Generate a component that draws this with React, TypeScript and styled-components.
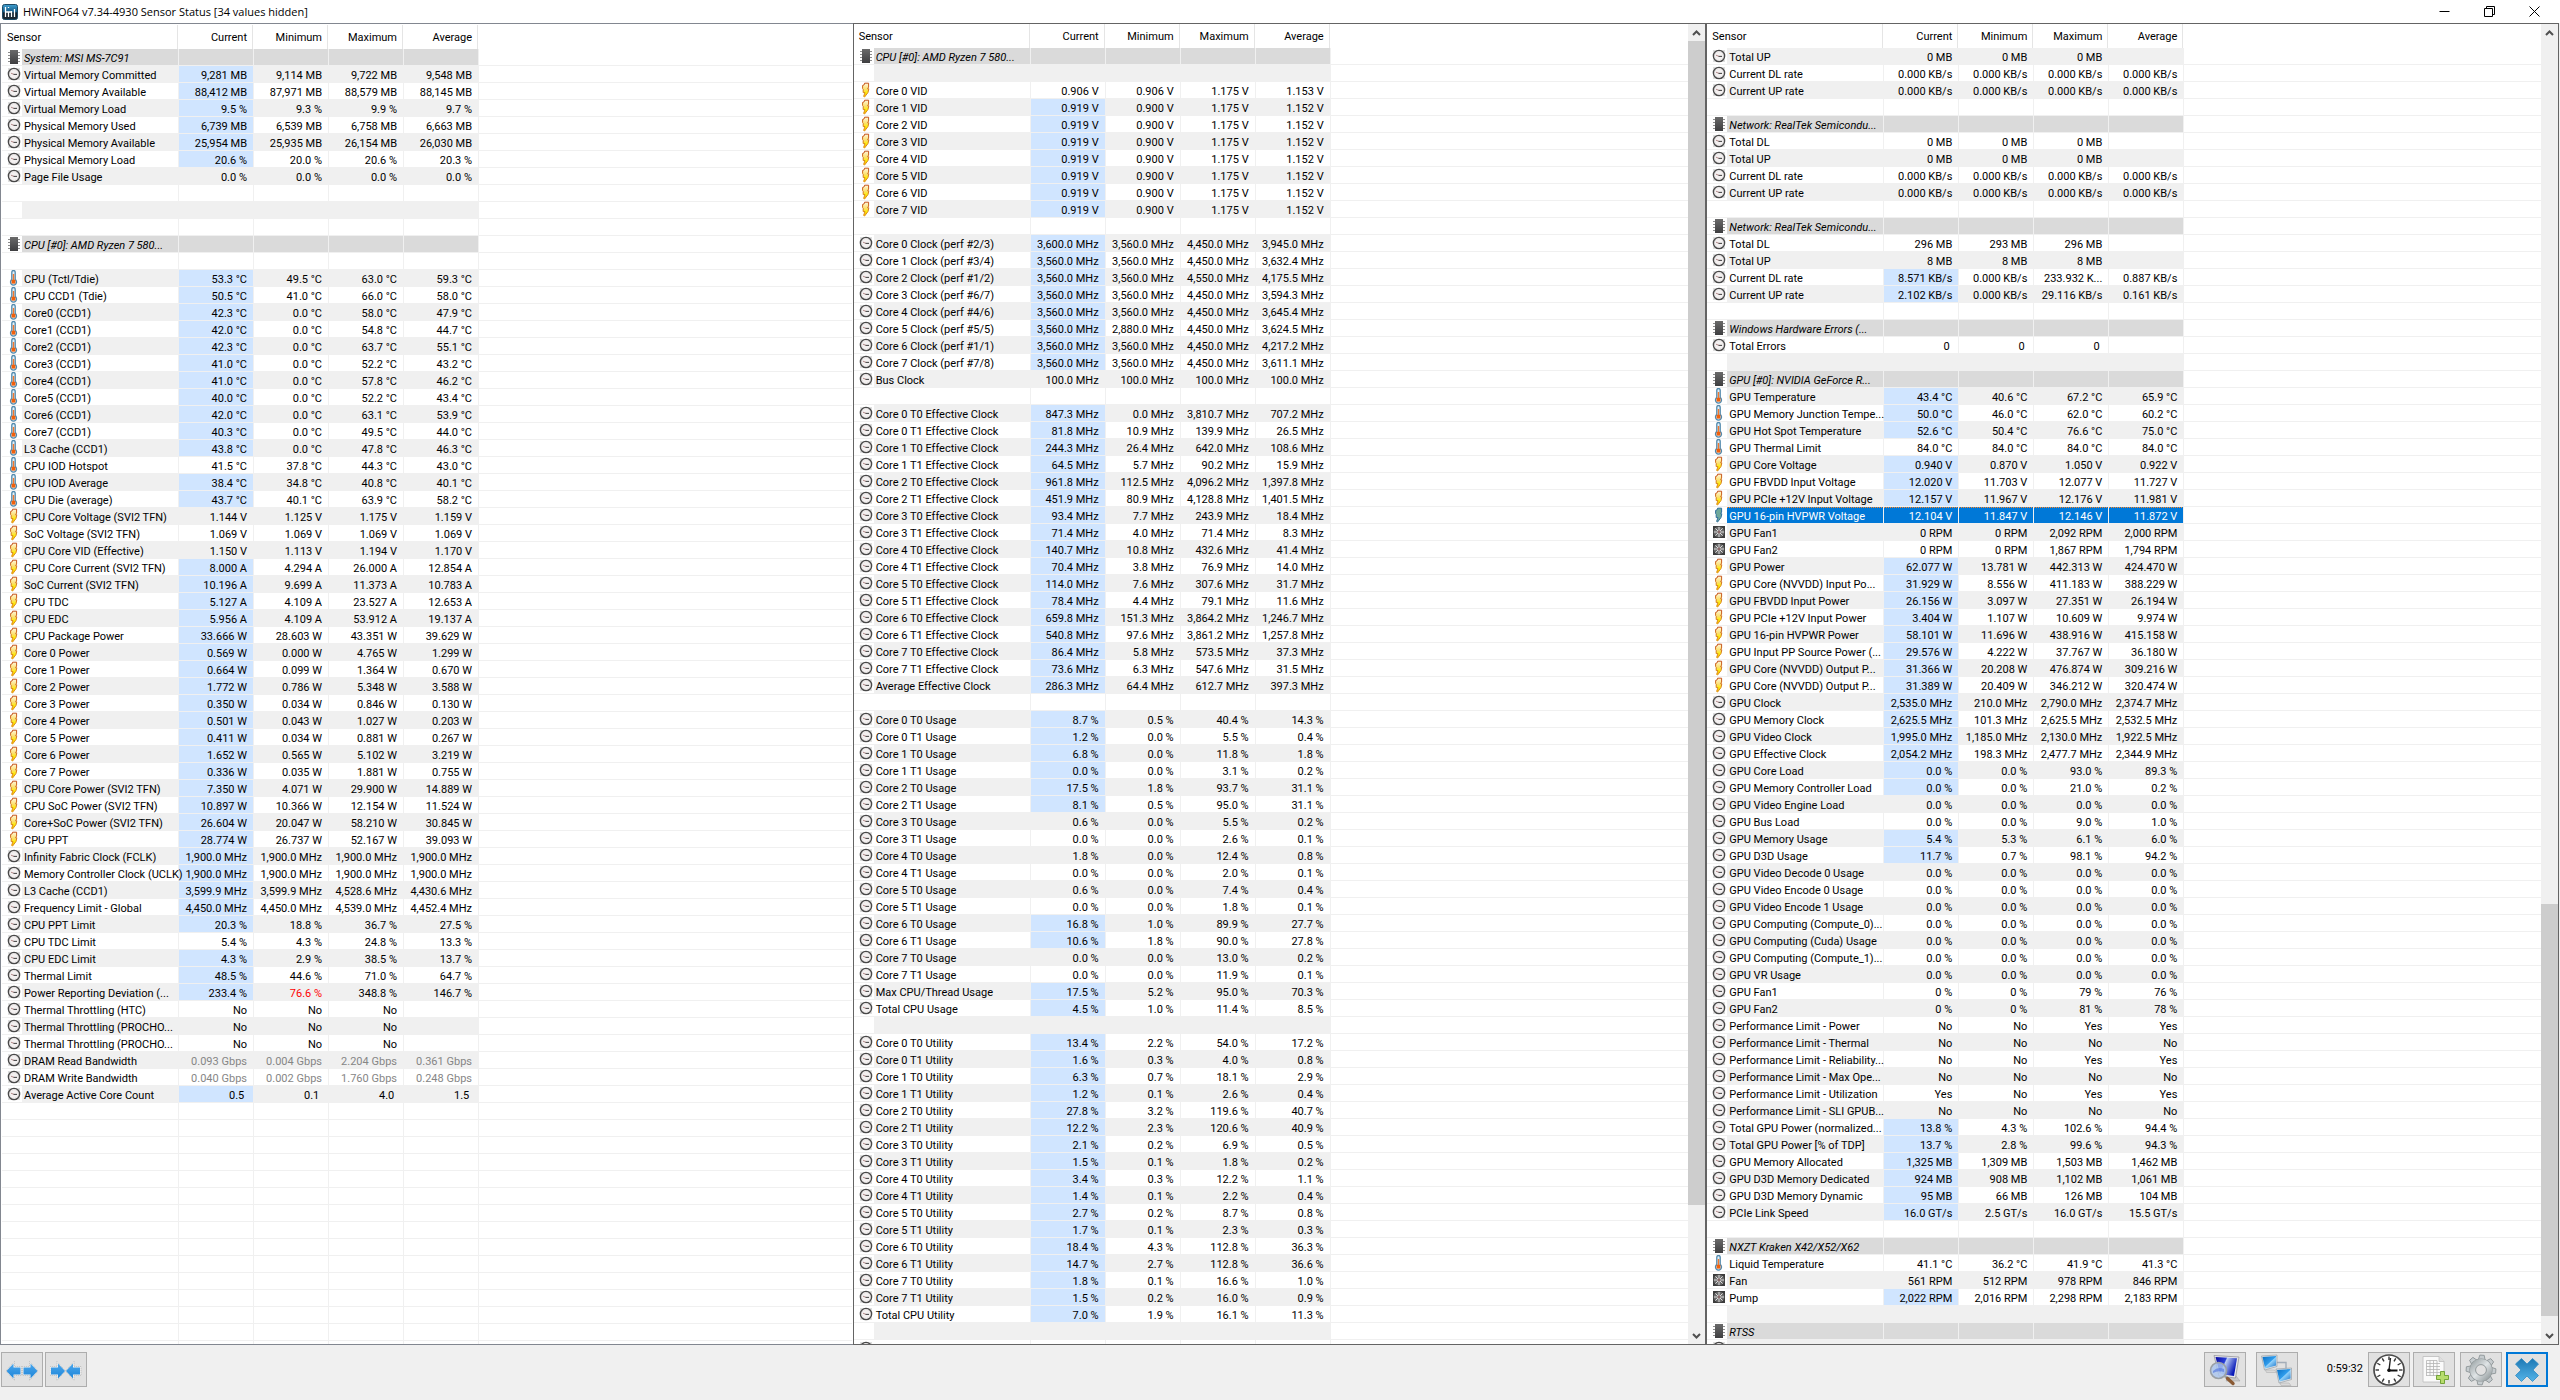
import React from "react";
import styled, { createGlobalStyle, css } from "styled-components";

const GlobalStyle = createGlobalStyle`
  * { box-sizing: border-box; }
  body { margin: 0; background: #f0f0f0; }
`;

const UI_FONT = `Roboto, "Noto Sans", sans-serif`;
const LINE = "#f0f0f0";

/* ---------- sensor data ----------
   Line: icon | name | current | minimum | maximum | average
   icon: S section, C clock, T thermometer, B bolt, F fan, X selected bolt,
   - blank row, E unused row below the list
   "*" before the current value marks it as changed, "!" a warning, "~" muted */

const SYSTEM = `
S|System: MSI MS-7C91
C|Virtual Memory Committed|*9,281 MB|9,114 MB|9,722 MB|9,548 MB
C|Virtual Memory Available|*88,412 MB|87,971 MB|88,579 MB|88,145 MB
C|Virtual Memory Load|*9.5 %|9.3 %|9.9 %|9.7 %
C|Physical Memory Used|*6,739 MB|6,539 MB|6,758 MB|6,663 MB
C|Physical Memory Available|*25,954 MB|25,935 MB|26,154 MB|26,030 MB
C|Physical Memory Load|*20.6 %|20.0 %|20.6 %|20.3 %
C|Page File Usage|0.0 %|0.0 %|0.0 %|0.0 %
-
-
-
S|CPU [#0]: AMD Ryzen 7 580...
-
T|CPU (Tctl/Tdie)|*53.3 °C|49.5 °C|63.0 °C|59.3 °C
T|CPU CCD1 (Tdie)|*50.5 °C|41.0 °C|66.0 °C|58.0 °C
T|Core0 (CCD1)|*42.3 °C|0.0 °C|58.0 °C|47.9 °C
T|Core1 (CCD1)|*42.0 °C|0.0 °C|54.8 °C|44.7 °C
T|Core2 (CCD1)|*42.3 °C|0.0 °C|63.7 °C|55.1 °C
T|Core3 (CCD1)|*41.0 °C|0.0 °C|52.2 °C|43.2 °C
T|Core4 (CCD1)|*41.0 °C|0.0 °C|57.8 °C|46.2 °C
T|Core5 (CCD1)|*40.0 °C|0.0 °C|52.2 °C|43.4 °C
T|Core6 (CCD1)|*42.0 °C|0.0 °C|63.1 °C|53.9 °C
T|Core7 (CCD1)|*40.3 °C|0.0 °C|49.5 °C|44.0 °C
T|L3 Cache (CCD1)|*43.8 °C|0.0 °C|47.8 °C|46.3 °C
T|CPU IOD Hotspot|41.5 °C|37.8 °C|44.3 °C|43.0 °C
T|CPU IOD Average|*38.4 °C|34.8 °C|40.8 °C|40.1 °C
T|CPU Die (average)|*43.7 °C|40.1 °C|63.9 °C|58.2 °C
B|CPU Core Voltage (SVI2 TFN)|1.144 V|1.125 V|1.175 V|1.159 V
B|SoC Voltage (SVI2 TFN)|1.069 V|1.069 V|1.069 V|1.069 V
B|CPU Core VID (Effective)|1.150 V|1.113 V|1.194 V|1.170 V
B|CPU Core Current (SVI2 TFN)|*8.000 A|4.294 A|26.000 A|12.854 A
B|SoC Current (SVI2 TFN)|*10.196 A|9.699 A|11.373 A|10.783 A
B|CPU TDC|*5.127 A|4.109 A|23.527 A|12.653 A
B|CPU EDC|*5.956 A|4.109 A|53.912 A|19.137 A
B|CPU Package Power|*33.666 W|28.603 W|43.351 W|39.629 W
B|Core 0 Power|*0.569 W|0.000 W|4.765 W|1.299 W
B|Core 1 Power|*0.664 W|0.099 W|1.364 W|0.670 W
B|Core 2 Power|*1.772 W|0.786 W|5.348 W|3.588 W
B|Core 3 Power|*0.350 W|0.034 W|0.846 W|0.130 W
B|Core 4 Power|*0.501 W|0.043 W|1.027 W|0.203 W
B|Core 5 Power|*0.411 W|0.034 W|0.881 W|0.267 W
B|Core 6 Power|*1.652 W|0.565 W|5.102 W|3.219 W
B|Core 7 Power|*0.336 W|0.035 W|1.881 W|0.755 W
B|CPU Core Power (SVI2 TFN)|*7.350 W|4.071 W|29.900 W|14.889 W
B|CPU SoC Power (SVI2 TFN)|*10.897 W|10.366 W|12.154 W|11.524 W
B|Core+SoC Power (SVI2 TFN)|*26.604 W|20.047 W|58.210 W|30.845 W
B|CPU PPT|*28.774 W|26.737 W|52.167 W|39.093 W
C|Infinity Fabric Clock (FCLK)|*1,900.0 MHz|1,900.0 MHz|1,900.0 MHz|1,900.0 MHz
C|Memory Controller Clock (UCLK)|*1,900.0 MHz|1,900.0 MHz|1,900.0 MHz|1,900.0 MHz
C|L3 Cache (CCD1)|*3,599.9 MHz|3,599.9 MHz|4,528.6 MHz|4,430.6 MHz
C|Frequency Limit - Global|*4,450.0 MHz|4,450.0 MHz|4,539.0 MHz|4,452.4 MHz
C|CPU PPT Limit|*20.3 %|18.8 %|36.7 %|27.5 %
C|CPU TDC Limit|5.4 %|4.3 %|24.8 %|13.3 %
C|CPU EDC Limit|*4.3 %|2.9 %|38.5 %|13.7 %
C|Thermal Limit|*48.5 %|44.6 %|71.0 %|64.7 %
C|Power Reporting Deviation (...|*233.4 %|!76.6 %|348.8 %|146.7 %
C|Thermal Throttling (HTC)|No|No|No|
C|Thermal Throttling (PROCHO...|No|No|No|
C|Thermal Throttling (PROCHO...|No|No|No|
C|DRAM Read Bandwidth|~0.093 Gbps|~0.004 Gbps|~2.204 Gbps|~0.361 Gbps
C|DRAM Write Bandwidth|~0.040 Gbps|~0.002 Gbps|~1.760 Gbps|~0.248 Gbps
C|Average Active Core Count|*0.5 |0.1 |4.0 |1.5 
`;

const CORES = `
S|CPU [#0]: AMD Ryzen 7 580...
-
B|Core 0 VID|0.906 V|0.906 V|1.175 V|1.153 V
B|Core 1 VID|*0.919 V|0.900 V|1.175 V|1.152 V
B|Core 2 VID|*0.919 V|0.900 V|1.175 V|1.152 V
B|Core 3 VID|*0.919 V|0.900 V|1.175 V|1.152 V
B|Core 4 VID|*0.919 V|0.900 V|1.175 V|1.152 V
B|Core 5 VID|*0.919 V|0.900 V|1.175 V|1.152 V
B|Core 6 VID|*0.919 V|0.900 V|1.175 V|1.152 V
B|Core 7 VID|*0.919 V|0.900 V|1.175 V|1.152 V
-
C|Core 0 Clock (perf #2/3)|*3,600.0 MHz|3,560.0 MHz|4,450.0 MHz|3,945.0 MHz
C|Core 1 Clock (perf #3/4)|*3,560.0 MHz|3,560.0 MHz|4,450.0 MHz|3,632.4 MHz
C|Core 2 Clock (perf #1/2)|*3,560.0 MHz|3,560.0 MHz|4,550.0 MHz|4,175.5 MHz
C|Core 3 Clock (perf #6/7)|*3,560.0 MHz|3,560.0 MHz|4,450.0 MHz|3,594.3 MHz
C|Core 4 Clock (perf #4/6)|*3,560.0 MHz|3,560.0 MHz|4,450.0 MHz|3,645.4 MHz
C|Core 5 Clock (perf #5/5)|*3,560.0 MHz|2,880.0 MHz|4,450.0 MHz|3,624.5 MHz
C|Core 6 Clock (perf #1/1)|*3,560.0 MHz|3,560.0 MHz|4,450.0 MHz|4,217.2 MHz
C|Core 7 Clock (perf #7/8)|*3,560.0 MHz|3,560.0 MHz|4,450.0 MHz|3,611.1 MHz
C|Bus Clock|100.0 MHz|100.0 MHz|100.0 MHz|100.0 MHz
-
C|Core 0 T0 Effective Clock|*847.3 MHz|0.0 MHz|3,810.7 MHz|707.2 MHz
C|Core 0 T1 Effective Clock|*81.8 MHz|10.9 MHz|139.9 MHz|26.5 MHz
C|Core 1 T0 Effective Clock|*244.3 MHz|26.4 MHz|642.0 MHz|108.6 MHz
C|Core 1 T1 Effective Clock|*64.5 MHz|5.7 MHz|90.2 MHz|15.9 MHz
C|Core 2 T0 Effective Clock|*961.8 MHz|112.5 MHz|4,096.2 MHz|1,397.8 MHz
C|Core 2 T1 Effective Clock|*451.9 MHz|80.9 MHz|4,128.8 MHz|1,401.5 MHz
C|Core 3 T0 Effective Clock|*93.4 MHz|7.7 MHz|243.9 MHz|18.4 MHz
C|Core 3 T1 Effective Clock|*71.4 MHz|4.0 MHz|71.4 MHz|8.3 MHz
C|Core 4 T0 Effective Clock|*140.7 MHz|10.8 MHz|432.6 MHz|41.4 MHz
C|Core 4 T1 Effective Clock|*70.4 MHz|3.8 MHz|76.9 MHz|14.0 MHz
C|Core 5 T0 Effective Clock|*114.0 MHz|7.6 MHz|307.6 MHz|31.7 MHz
C|Core 5 T1 Effective Clock|*78.4 MHz|4.4 MHz|79.1 MHz|11.6 MHz
C|Core 6 T0 Effective Clock|*659.8 MHz|151.3 MHz|3,864.2 MHz|1,246.7 MHz
C|Core 6 T1 Effective Clock|*540.8 MHz|97.6 MHz|3,861.2 MHz|1,257.8 MHz
C|Core 7 T0 Effective Clock|*86.4 MHz|5.8 MHz|573.5 MHz|37.3 MHz
C|Core 7 T1 Effective Clock|*73.6 MHz|6.3 MHz|547.6 MHz|31.5 MHz
C|Average Effective Clock|*286.3 MHz|64.4 MHz|612.7 MHz|397.3 MHz
-
C|Core 0 T0 Usage|*8.7 %|0.5 %|40.4 %|14.3 %
C|Core 0 T1 Usage|*1.2 %|0.0 %|5.5 %|0.4 %
C|Core 1 T0 Usage|*6.8 %|0.0 %|11.8 %|1.8 %
C|Core 1 T1 Usage|*0.0 %|0.0 %|3.1 %|0.2 %
C|Core 2 T0 Usage|*17.5 %|1.8 %|93.7 %|31.1 %
C|Core 2 T1 Usage|*8.1 %|0.5 %|95.0 %|31.1 %
C|Core 3 T0 Usage|0.6 %|0.0 %|5.5 %|0.2 %
C|Core 3 T1 Usage|0.0 %|0.0 %|2.6 %|0.1 %
C|Core 4 T0 Usage|1.8 %|0.0 %|12.4 %|0.8 %
C|Core 4 T1 Usage|0.0 %|0.0 %|2.0 %|0.1 %
C|Core 5 T0 Usage|0.6 %|0.0 %|7.4 %|0.4 %
C|Core 5 T1 Usage|0.0 %|0.0 %|1.8 %|0.1 %
C|Core 6 T0 Usage|*16.8 %|1.0 %|89.9 %|27.7 %
C|Core 6 T1 Usage|*10.6 %|1.8 %|90.0 %|27.8 %
C|Core 7 T0 Usage|0.0 %|0.0 %|13.0 %|0.2 %
C|Core 7 T1 Usage|0.0 %|0.0 %|11.9 %|0.1 %
C|Max CPU/Thread Usage|*17.5 %|5.2 %|95.0 %|70.3 %
C|Total CPU Usage|*4.5 %|1.0 %|11.4 %|8.5 %
-
C|Core 0 T0 Utility|*13.4 %|2.2 %|54.0 %|17.2 %
C|Core 0 T1 Utility|*1.6 %|0.3 %|4.0 %|0.8 %
C|Core 1 T0 Utility|*6.3 %|0.7 %|18.1 %|2.9 %
C|Core 1 T1 Utility|*1.2 %|0.1 %|2.6 %|0.4 %
C|Core 2 T0 Utility|*27.8 %|3.2 %|119.6 %|40.7 %
C|Core 2 T1 Utility|*12.2 %|2.3 %|120.6 %|40.9 %
C|Core 3 T0 Utility|*2.1 %|0.2 %|6.9 %|0.5 %
C|Core 3 T1 Utility|*1.5 %|0.1 %|1.8 %|0.2 %
C|Core 4 T0 Utility|*3.4 %|0.3 %|12.2 %|1.1 %
C|Core 4 T1 Utility|*1.4 %|0.1 %|2.2 %|0.4 %
C|Core 5 T0 Utility|*2.7 %|0.2 %|8.7 %|0.8 %
C|Core 5 T1 Utility|*1.7 %|0.1 %|2.3 %|0.3 %
C|Core 6 T0 Utility|*18.4 %|4.3 %|112.8 %|36.3 %
C|Core 6 T1 Utility|*14.7 %|2.7 %|112.8 %|36.6 %
C|Core 7 T0 Utility|*1.8 %|0.1 %|16.6 %|1.0 %
C|Core 7 T1 Utility|*1.5 %|0.2 %|16.0 %|0.9 %
C|Total CPU Utility|*7.0 %|1.9 %|16.1 %|11.3 %
-
C|
`;

const GPU = `
C|Total UP|0 MB|0 MB|0 MB|
C|Current DL rate|0.000 KB/s|0.000 KB/s|0.000 KB/s|0.000 KB/s
C|Current UP rate|0.000 KB/s|0.000 KB/s|0.000 KB/s|0.000 KB/s
-
S|Network: RealTek Semicondu...
C|Total DL|0 MB|0 MB|0 MB|
C|Total UP|0 MB|0 MB|0 MB|
C|Current DL rate|0.000 KB/s|0.000 KB/s|0.000 KB/s|0.000 KB/s
C|Current UP rate|0.000 KB/s|0.000 KB/s|0.000 KB/s|0.000 KB/s
-
S|Network: RealTek Semicondu...
C|Total DL|296 MB|293 MB|296 MB|
C|Total UP|8 MB|8 MB|8 MB|
C|Current DL rate|*8.571 KB/s|0.000 KB/s|233.932 K...|0.887 KB/s
C|Current UP rate|*2.102 KB/s|0.000 KB/s|29.116 KB/s|0.161 KB/s
-
S|Windows Hardware Errors (...
C|Total Errors|0 |0 |0 |
-
S|GPU [#0]: NVIDIA GeForce R...
T|GPU Temperature|*43.4 °C|40.6 °C|67.2 °C|65.9 °C
T|GPU Memory Junction Tempe...|*50.0 °C|46.0 °C|62.0 °C|60.2 °C
T|GPU Hot Spot Temperature|*52.6 °C|50.4 °C|76.6 °C|75.0 °C
T|GPU Thermal Limit|84.0 °C|84.0 °C|84.0 °C|84.0 °C
B|GPU Core Voltage|*0.940 V|0.870 V|1.050 V|0.922 V
B|GPU FBVDD Input Voltage|*12.020 V|11.703 V|12.077 V|11.727 V
B|GPU PCIe +12V Input Voltage|*12.157 V|11.967 V|12.176 V|11.981 V
X|GPU 16-pin HVPWR Voltage|12.104 V|11.847 V|12.146 V|11.872 V
F|GPU Fan1|0 RPM|0 RPM|2,092 RPM|2,000 RPM
F|GPU Fan2|0 RPM|0 RPM|1,867 RPM|1,794 RPM
B|GPU Power|*62.077 W|13.781 W|442.313 W|424.470 W
B|GPU Core (NVVDD) Input Po...|*31.929 W|8.556 W|411.183 W|388.229 W
B|GPU FBVDD Input Power|*26.156 W|3.097 W|27.351 W|26.194 W
B|GPU PCIe +12V Input Power|*3.404 W|1.107 W|10.609 W|9.974 W
B|GPU 16-pin HVPWR Power|*58.101 W|11.696 W|438.916 W|415.158 W
B|GPU Input PP Source Power (...|*29.576 W|4.222 W|37.767 W|36.180 W
B|GPU Core (NVVDD) Output P...|*31.366 W|20.208 W|476.874 W|309.216 W
B|GPU Core (NVVDD) Output P...|*31.389 W|20.409 W|346.212 W|320.474 W
C|GPU Clock|*2,535.0 MHz|210.0 MHz|2,790.0 MHz|2,374.7 MHz
C|GPU Memory Clock|*2,625.5 MHz|101.3 MHz|2,625.5 MHz|2,532.5 MHz
C|GPU Video Clock|*1,995.0 MHz|1,185.0 MHz|2,130.0 MHz|1,922.5 MHz
C|GPU Effective Clock|*2,054.2 MHz|198.3 MHz|2,477.7 MHz|2,344.9 MHz
C|GPU Core Load|*0.0 %|0.0 %|93.0 %|89.3 %
C|GPU Memory Controller Load|*0.0 %|0.0 %|21.0 %|0.2 %
C|GPU Video Engine Load|0.0 %|0.0 %|0.0 %|0.0 %
C|GPU Bus Load|0.0 %|0.0 %|9.0 %|1.0 %
C|GPU Memory Usage|*5.4 %|5.3 %|6.1 %|6.0 %
C|GPU D3D Usage|*11.7 %|0.7 %|98.1 %|94.2 %
C|GPU Video Decode 0 Usage|0.0 %|0.0 %|0.0 %|0.0 %
C|GPU Video Encode 0 Usage|0.0 %|0.0 %|0.0 %|0.0 %
C|GPU Video Encode 1 Usage|0.0 %|0.0 %|0.0 %|0.0 %
C|GPU Computing (Compute_0)...|0.0 %|0.0 %|0.0 %|0.0 %
C|GPU Computing (Cuda) Usage|0.0 %|0.0 %|0.0 %|0.0 %
C|GPU Computing (Compute_1)...|0.0 %|0.0 %|0.0 %|0.0 %
C|GPU VR Usage|0.0 %|0.0 %|0.0 %|0.0 %
C|GPU Fan1|0 %|0 %|79 %|76 %
C|GPU Fan2|0 %|0 %|81 %|78 %
C|Performance Limit - Power|No|No|Yes|Yes
C|Performance Limit - Thermal|No|No|No|No
C|Performance Limit - Reliability...|No|No|Yes|Yes
C|Performance Limit - Max Ope...|No|No|No|No
C|Performance Limit - Utilization|Yes|No|Yes|Yes
C|Performance Limit - SLI GPUB...|No|No|No|No
C|Total GPU Power (normalized...|*13.8 %|4.3 %|102.6 %|94.4 %
C|Total GPU Power [% of TDP]|*13.7 %|2.8 %|99.6 %|94.3 %
C|GPU Memory Allocated|*1,325 MB|1,309 MB|1,503 MB|1,462 MB
C|GPU D3D Memory Dedicated|*924 MB|908 MB|1,102 MB|1,061 MB
C|GPU D3D Memory Dynamic|*95 MB|66 MB|126 MB|104 MB
C|PCIe Link Speed|*16.0 GT/s|2.5 GT/s|16.0 GT/s|15.5 GT/s
-
S|NXZT Kraken X42/X52/X62
T|Liquid Temperature|41.1 °C|36.2 °C|41.9 °C|41.3 °C
F|Fan|561 RPM|512 RPM|978 RPM|846 RPM
F|Pump|*2,022 RPM|2,016 RPM|2,298 RPM|2,183 RPM
-
S|RTSS
C|
`;

type Kind = "section" | "even" | "odd" | "selected";

interface SensorRow {
  icon: string;
  name: string;
  values: string[];
}

const parse = (text: string): SensorRow[] =>
  text
    .slice(1, -1)
    .split("\n")
    .map((line) => {
      const [icon, name = "", ...values] = line.split("|");
      return { icon, name, values: [0, 1, 2, 3].map((i) => values[i] ?? "") };
    });

const unusedRows = (count: number): SensorRow[] =>
  Array.from({ length: count }, () => ({ icon: "E", name: "", values: ["", "", "", ""] }));

/* ---------- icons ---------- */

const Glyph = styled.svg`
  display: block;
  width: 16px;
  height: 16px;
  flex: none;
`;

const DefsSvg = styled.svg`
  position: absolute;
  width: 0;
  height: 0;
`;

const SharedDefs = () => (
  <DefsSvg aria-hidden="true">
    <defs>
      <linearGradient id="chip" x1="0" y1="0" x2="0" y2="1">
        <stop offset="0" stopColor="#6a6a6a" />
        <stop offset="1" stopColor="#3e3e40" />
      </linearGradient>
      <linearGradient id="bolt" x1="0" y1="0" x2="0" y2="1">
        <stop offset="0" stopColor="#fff6dc" />
        <stop offset="0.45" stopColor="#fbdf6a" />
        <stop offset="0.7" stopColor="#fdf000" />
        <stop offset="1" stopColor="#f2a000" />
      </linearGradient>
      <linearGradient id="boltEdge" x1="0" y1="0" x2="0" y2="1">
        <stop offset="0" stopColor="#c4531c" />
        <stop offset="1" stopColor="#e39a1c" />
      </linearGradient>
      <linearGradient id="arrow" x1="0" y1="0" x2="0" y2="1">
        <stop offset="0" stopColor="#4aa6ec" />
        <stop offset="1" stopColor="#1f86d8" />
      </linearGradient>
      <linearGradient id="screen" x1="0" y1="0" x2="1" y2="0.4">
        <stop offset="0" stopColor="#0a0aa0" />
        <stop offset="0.45" stopColor="#2a3fd8" />
        <stop offset="0.5" stopColor="#b9ccf4" />
        <stop offset="1" stopColor="#0818b8" />
      </linearGradient>
      <linearGradient id="screen2" x1="0" y1="0" x2="1" y2="1">
        <stop offset="0" stopColor="#0a6fc4" />
        <stop offset="0.5" stopColor="#2f9cec" />
        <stop offset="0.55" stopColor="#8fd0fa" />
        <stop offset="1" stopColor="#1470c8" />
      </linearGradient>
      <linearGradient id="steel" x1="0" y1="0" x2="1" y2="1">
        <stop offset="0" stopColor="#a4acae" />
        <stop offset="0.5" stopColor="#dfe4e6" />
        <stop offset="1" stopColor="#9aa2a4" />
      </linearGradient>
      <linearGradient id="cross" x1="0" y1="0" x2="0" y2="1">
        <stop offset="0" stopColor="#1d78b4" />
        <stop offset="1" stopColor="#55b4e8" />
      </linearGradient>
      <linearGradient id="logo" x1="0" y1="0" x2="0" y2="1">
        <stop offset="0" stopColor="#3f9fd0" />
        <stop offset="0.5" stopColor="#145a86" />
        <stop offset="0.55" stopColor="#10202c" />
        <stop offset="1" stopColor="#1c2a34" />
      </linearGradient>
    </defs>
  </DefsSvg>
);

const ChipIcon = () => (
  <Glyph viewBox="0 0 16 16">
    <path d="M2 3.5h12M2 6.5h12M2 9.5h12M2 12.5h12" stroke="#8c8c8c" strokeWidth="1" />
    <rect x="4" y="1" width="8" height="14" fill="url(#chip)" />
  </Glyph>
);

const ClockIcon = () => (
  <Glyph viewBox="0 0 16 16">
    <rect x="2" y="2" width="12" height="12" fill="#dedede" />
    <circle cx="8" cy="8" r="5.6" fill="#f4f1f1" stroke="#484848" strokeWidth="1.4" />
    <circle cx="8" cy="8" r="4.4" fill="none" stroke="#c4c0c0" strokeWidth="0.8" strokeDasharray="1 1.3" />
    <path d="M5 7.2L8 8.4" stroke="#b58a8a" strokeWidth="1" />
    <path d="M7.6 8.4H11" stroke="#4a4a4a" strokeWidth="1.1" />
  </Glyph>
);

const ThermometerIcon = () => (
  <Glyph viewBox="0 0 16 16">
    <path
      d="M7.5 0.5a1.7 1.7 0 0 1 1.7 1.7V9.6a3 3 0 1 1-3.4 0V2.2A1.7 1.7 0 0 1 7.5 0.5Z"
      fill="#e2f0fa"
      stroke="#4f88ac"
      strokeWidth="1.3"
    />
    <rect x="6.8" y="4" width="1.4" height="7" fill="#f07830" />
    <rect x="5.6" y="9.8" width="3.8" height="3.8" fill="#f0600c" />
  </Glyph>
);

const BoltIcon = ({ tinted }: { tinted?: boolean }) => (
  <Glyph viewBox="0 0 16 16">
    <path
      d="M6.6 1.2H10.6V5L9.6 6.8H10.8L10 10.5L6.6 15L5.6 14.4L7 10.6H5.2V7.4L4.6 6.6V3.4L6 3Z"
      fill={tinted ? "#6fa89a" : "url(#bolt)"}
      stroke={tinted ? "#2f6f9c" : "url(#boltEdge)"}
      strokeWidth="1"
    />
  </Glyph>
);

const FanIcon = () => (
  <Glyph viewBox="0 0 16 16">
    <rect x="2" y="2" width="12" height="12" fill="#3c3c3c" />
    <circle cx="8" cy="8" r="5.4" fill="#6a6a6a" />
    <path
      d="M8 8V3M8 8V13M8 8H3M8 8H13M8 8L4.4 4.4M8 8L11.6 11.6M8 8L11.6 4.4M8 8L4.4 11.6"
      stroke="#dcdcdc"
      strokeWidth="1"
    />
    <circle cx="8" cy="8" r="1.4" fill="#8a6a6a" />
  </Glyph>
);

const icons: Record<string, React.ReactNode> = {
  S: <ChipIcon />,
  C: <ClockIcon />,
  T: <ThermometerIcon />,
  B: <BoltIcon />,
  X: <BoltIcon tinted />,
  F: <FanIcon />,
};

/* ---------- window frame ---------- */

const Window = styled.div`
  display: flex;
  flex-direction: column;
  height: 100vh;
  overflow: hidden;
  background: #f0f0f0;
  color: #000;
  font: 11px/16px ${UI_FONT};
`;

const TitleBar = styled.header`
  display: flex;
  align-items: center;
  height: 23px;
  flex: none;
  padding: 0 3px 0 2px;
  gap: 5px;
  background: #fff;
`;

const Title = styled.h1`
  flex: 1;
  margin: 0;
  font: 11px/22px "Open Sans", "Noto Sans", sans-serif;
`;

const CaptionButtons = styled.div`
  display: flex;
`;

const CaptionButton = styled.button`
  display: grid;
  place-items: center;
  width: 45px;
  height: 22px;
  padding: 0;
  border: 0;
  background: transparent;
`;

const CaptionGlyph = styled.svg`
  display: block;
  width: 11px;
  height: 11px;
  fill: none;
  stroke: #000;
  stroke-width: 1;
`;

const Panes = styled.main`
  flex: 1;
  min-height: 0;
  display: grid;
  grid-template-columns: repeat(3, minmax(0, 1fr));
  padding-right: 2px;
  background: linear-gradient(#646464, #646464) calc(100% - 1px) 0 / 1px 100% no-repeat #f0f0f0;
`;

const Pane = styled.section<{ $edge: number; $muted?: boolean }>`
  display: flex;
  min-width: 0;
  overflow: hidden;
  background: #fff;
  border: 0 solid ${(p) => (p.$muted ? "#828790" : "#646464")};
  border-width: 1px 0 1px ${(p) => p.$edge}px;
  ${(p) =>
    p.$muted &&
    css`
      padding: 1px 1px 0 1px;
    `}
`;

const ListView = styled.div`
  flex: 1;
  min-width: 0;
  overflow: hidden;
`;

/* ---------- sensor table ---------- */

const Table = styled.table`
  width: 100%;
  table-layout: fixed;
  border-collapse: separate;
  border-spacing: 0;
  white-space: pre;
`;

const IconCol = styled.col`
  width: 20px;
`;
const NameCol = styled.col`
  width: 157px;
`;
const ValueCol = styled.col`
  width: 75px;
`;

const HeadCell = styled.th<{ $left?: boolean }>`
  height: 24px;
  padding: ${(p) => (p.$left ? "2px 0 0 5px" : "2px 7px 0 0")};
  background: linear-gradient(#e5e5e5, #e5e5e5) calc(100% - 1px) 0 / 1px 100% no-repeat;
  font-weight: normal;
  text-align: ${(p) => (p.$left ? "left" : "right")};
`;

const HeadFiller = styled.th`
  padding: 0;
`;

const rowFill: Record<Kind, string> = {
  section: "#dadada",
  even: "#ffffff",
  odd: "#f0f0f0",
  selected: "#0078d7",
};

const baseCell = css`
  height: 17px;
  padding: 0;
  border-bottom: 1px solid ${LINE};
  background-clip: padding-box;
`;

const textCell = css<{ $kind: Kind }>`
  ${baseCell}
  padding-top: 3px;
  line-height: 13px;
  border-right: 1px solid ${LINE};
  background-color: ${(p) => rowFill[p.$kind]};
  ${(p) =>
    p.$kind === "selected" &&
    css`
      background-image: repeating-linear-gradient(90deg, #ff8728 0 1px, transparent 1px 2px);
      background-size: 100% 1px;
      background-repeat: no-repeat;
    `}
`;

const IconCell = styled.td`
  ${baseCell}
  padding-left: 4px;
`;

const NameCell = styled.th<{ $kind: Kind }>`
  ${textCell}
  padding-left: 2px;
  font-weight: normal;
  font-style: ${(p) => (p.$kind === "section" ? "italic" : "normal")};
  text-align: left;
  color: ${(p) => (p.$kind === "selected" ? "#fff" : "#000")};
`;

const toneColor: Record<string, string> = { "!": "#ff0000", "~": "#868686" };

const ValueCell = styled.td<{ $kind: Kind; $changed: boolean; $tone: string }>`
  ${textCell}
  padding-right: 6px;
  ${(p) => p.$changed && "background-color: #d0e5ff;"}
  text-align: right;
  color: ${(p) => (p.$kind === "selected" ? "#fff" : toneColor[p.$tone] ?? "#000")};
`;

const FillerCell = styled.td`
  ${baseCell}
`;

const kindOf = (row: SensorRow, index: number, phase: number): Kind => {
  if (row.icon === "S") return "section";
  if (row.icon === "X") return "selected";
  return row.icon === "E" || index % 2 === phase ? "even" : "odd";
};

const SensorTable = ({ rows, phase }: { rows: SensorRow[]; phase: number }) => (
  <Table>
    <colgroup>
      <IconCol />
      <NameCol />
      <ValueCol />
      <ValueCol />
      <ValueCol />
      <ValueCol />
      <col />
    </colgroup>
    <thead>
      <tr>
        <HeadCell $left colSpan={2} scope="col">
          Sensor
        </HeadCell>
        <HeadCell scope="col">Current</HeadCell>
        <HeadCell scope="col">Minimum</HeadCell>
        <HeadCell scope="col">Maximum</HeadCell>
        <HeadCell scope="col">Average</HeadCell>
        <HeadFiller />
      </tr>
    </thead>
    <tbody>
      {rows.map((row, i) => {
        const kind = kindOf(row, i, phase);
        return (
          <tr key={i}>
            <IconCell>{icons[row.icon]}</IconCell>
            <NameCell $kind={kind} scope="row">
              {row.name}
            </NameCell>
            {row.values.map((value, j) => (
              <ValueCell key={j} $kind={kind} $changed={value[0] === "*"} $tone={value[0] ?? ""}>
                {value.replace(/^[*!~]/, "")}
              </ValueCell>
            ))}
            <FillerCell />
          </tr>
        );
      })}
    </tbody>
  </Table>
);

/* ---------- scroll bar ---------- */

const ScrollTrack = styled.div`
  flex: none;
  display: flex;
  flex-direction: column;
  width: 17px;
  background: #f0f0f0;
`;

const ScrollButton = styled.button`
  display: grid;
  place-items: center;
  width: 100%;
  height: 17px;
  padding: 0;
  border: 0;
  background: transparent;
`;

const ScrollRun = styled.div`
  flex: 1;
  min-height: 0;
  display: flex;
  flex-direction: column;
`;

const Portion = styled.div<{ $share: number; $thumb?: boolean }>`
  flex: ${(p) => p.$share} 0 0;
  background: ${(p) => (p.$thumb ? "#cdcdcd" : "transparent")};
`;

const Chevron = ({ down }: { down?: boolean }) => (
  <svg width="9" height="6" viewBox="0 0 9 6" aria-hidden="true">
    <path d={down ? "M1 1L4.5 4.5L8 1" : "M1 5L4.5 1.5L8 5"} fill="none" stroke="#505050" strokeWidth="2" />
  </svg>
);

const ScrollBar = ({ before, thumb, after }: { before: number; thumb: number; after: number }) => (
  <ScrollTrack>
    <ScrollButton aria-label="Scroll up">
      <Chevron />
    </ScrollButton>
    <ScrollRun>
      <Portion $share={before} />
      <Portion $share={thumb} $thumb />
      <Portion $share={after} />
    </ScrollRun>
    <ScrollButton aria-label="Scroll down">
      <Chevron down />
    </ScrollButton>
  </ScrollTrack>
);

/* ---------- bottom tool bar ---------- */

const ToolBar = styled.footer`
  display: flex;
  justify-content: space-between;
  flex: none;
  height: 55px;
  padding: 7px 12px 0 1px;
`;

const Group = styled.div<{ $gap: number }>`
  display: flex;
  gap: ${(p) => p.$gap}px;
`;

const ToolButton = styled.button<{ $primary?: boolean }>`
  display: grid;
  place-items: center;
  width: 42px;
  height: 35px;
  padding: 0;
  border: ${(p) => (p.$primary ? "2px solid #0078d7" : "1px solid #adadad")};
  background: #e1e1e1;
`;

const ToolGlyph = styled.svg`
  display: block;
  width: 32px;
  height: 32px;
`;

const Elapsed = styled.time`
  width: 60px;
  line-height: 34px;
  text-align: right;
`;

const ExpandIcon = () => (
  <ToolGlyph viewBox="0 0 32 32">
    <path
      d="M0 17L8.5 7.5V12.5H15.5V21.5H8.5V26.5ZM32 17L23.5 7.5V12.5H16.5V21.5H23.5V26.5Z"
      fill="#f2f2f2"
      stroke="#a8a8a8"
      strokeWidth="0.7"
      strokeDasharray="1 1"
    />
    <path
      d="M0.5 17L7.5 9.5V13.5H14.5V20.5H7.5V24.5ZM31.5 17L24.5 9.5V13.5H17.5V20.5H24.5V24.5Z"
      fill="url(#arrow)"
    />
  </ToolGlyph>
);

const ShrinkIcon = () => (
  <ToolGlyph viewBox="0 0 32 32">
    <path
      d="M15.5 17L7 7.5V12.5H0V21.5H7V26.5ZM15.5 17L24 7.5V12.5H31V21.5H24V26.5Z"
      fill="#f2f2f2"
      stroke="#a8a8a8"
      strokeWidth="0.7"
      strokeDasharray="1 1"
    />
    <path
      d="M15 17L8 9.5V13.5H1V20.5H8V24.5ZM16 17L23 9.5V13.5H30V20.5H23V24.5Z"
      fill="url(#arrow)"
    />
  </ToolGlyph>
);

const InspectIcon = () => (
  <ToolGlyph viewBox="0 0 32 32">
    <path d="M17 27H31L27 22H20Z" fill="#c9c9c9" stroke="#9a9a9a" strokeWidth="0.5" />
    <path d="M5 1.5L30 3L26.5 24L10 22Z" fill="#e6e6ea" stroke="#8c8c94" strokeWidth="0.7" />
    <path d="M6.5 3L28 4.2L25 22L11 20Z" fill="url(#screen)" />
    <path d="M16 22L20.5 26" stroke="#9aa0a6" strokeWidth="2.4" />
    <path d="M18.5 24.5L24 29.5" stroke="#8a5a34" strokeWidth="3.4" strokeLinecap="round" />
    <circle cx="9.5" cy="16.5" r="8" fill="#a9c4ee" fillOpacity="0.82" stroke="#9aa0a6" strokeWidth="1.6" />
    <path d="M4 17Q9 12 15 15V18Q9 16 4 19Z" fill="#5a7ce0" fillOpacity="0.7" />
  </ToolGlyph>
);

const Monitor = ({ x, y }: { x: number; y: number }) => (
  <g transform={`translate(${x} ${y})`}>
    <path d="M4 15H13L15 17.5H5Z" fill="#d8d8d8" stroke="#a8a8a8" strokeWidth="0.5" />
    <path d="M0 1L15.5 0V11.5L3 15Z" fill="#dde2e6" stroke="#8e969c" strokeWidth="0.6" />
    <path d="M1 2L14.6 1V10.6L3.6 13.6Z" fill="url(#screen2)" />
  </g>
);

const NetworkIcon = () => (
  <ToolGlyph viewBox="0 0 32 32">
    <path d="M15 8.5H25V15" fill="none" stroke="#a3adb8" strokeWidth="1.4" />
    <Monitor x={0.5} y={1} />
    <Monitor x={15} y={14} />
  </ToolGlyph>
);

const WallClockIcon = () => (
  <ToolGlyph viewBox="0 0 32 32">
    <circle cx="16" cy="16" r="15" fill="#fff" stroke="#4a4a4a" strokeWidth="1.7" />
    {Array.from({ length: 12 }, (_, i) => (
      <path key={i} d="M16 2.5V6" stroke="#333" strokeWidth="1.4" transform={`rotate(${i * 30} 16 16)`} />
    ))}
    <path d="M16 16L17.5 4" stroke="#222" strokeWidth="1.4" />
    <path d="M15 16.5H24.5" stroke="#111" strokeWidth="2" />
    <circle cx="16" cy="16.3" r="1.8" fill="#111" />
  </ToolGlyph>
);

const LogIcon = () => (
  <ToolGlyph viewBox="0 0 32 32">
    <path d="M5 2.5H21L26 7.5V28H5Z" fill="#fafafa" stroke="#c2c2c2" strokeWidth="0.9" />
    <path d="M21 2.5V7.5H26" fill="#dedede" stroke="#b8b8b8" strokeWidth="0.7" />
    <path
      d="M8.5 6.5H19M8.5 9.5H22M8.5 12.5H22M8.5 15.5H22M8.5 18.5H22M8.5 21.5H20M8.5 6.5V22M12 6.5V22M15.5 6.5V22M19 6.5V22"
      stroke="#b4b4b4"
      strokeWidth="0.8"
    />
    <path
      d="M22.5 17.5H26.5V21.5H30.5V25.5H26.5V29.5H22.5V25.5H18.5V21.5H22.5Z"
      fill="#b6dc6c"
      stroke="#6a9c2c"
      strokeWidth="0.9"
    />
  </ToolGlyph>
);

const GearIcon = () => (
  <ToolGlyph viewBox="0 0 32 32">
    {Array.from({ length: 8 }, (_, i) => (
      <path
        key={i}
        d="M12.6 6L13.8 1.2H18.2L19.4 6Z"
        fill="#c6cccf"
        stroke="#8f9698"
        strokeWidth="0.9"
        transform={`rotate(${i * 45 + 4} 16 16)`}
      />
    ))}
    <circle cx="16" cy="16" r="8.2" fill="none" stroke="#8f9698" strokeWidth="6.8" />
    <circle cx="16" cy="16" r="8.2" fill="none" stroke="url(#steel)" strokeWidth="5.6" />
    <circle cx="16" cy="16" r="5.4" fill="#e1e1e1" stroke="#8f9698" strokeWidth="0.9" />
  </ToolGlyph>
);

const CrossIcon = () => (
  <ToolGlyph viewBox="0 0 32 32">
    <path
      d="M10.5 4.5L16 10L21.5 4.5L27.5 10L22 16L27.5 21.5L21.5 27.5L16 22L10.5 27.5L4.5 21.5L10 16L4.5 10Z"
      fill="url(#cross)"
      stroke="#2f8ac4"
      strokeWidth="0.8"
    />
  </ToolGlyph>
);

const systemRows = [...parse(SYSTEM), ...unusedRows(16)];
const coreRows = parse(CORES);
const gpuRows = parse(GPU);

export default function App() {
  return (
    <Window>
      <GlobalStyle />
      <SharedDefs />
      <TitleBar>
        <Glyph viewBox="0 0 16 16" aria-hidden="true">
          <rect x="0.5" y="0.5" width="15" height="15" rx="2" fill="url(#logo)" stroke="#1c4a66" />
          <path d="M3.5 3V13M6.5 8V13M9.5 7V13M12.5 5V13M6.5 3V4M3.5 8H10" stroke="#fff" strokeWidth="1.3" />
        </Glyph>
        <Title>HWiNFO64 v7.34-4930 Sensor Status [34 values hidden]</Title>
        <CaptionButtons>
          <CaptionButton aria-label="Minimize">
            <CaptionGlyph viewBox="0 0 11 11">
              <path d="M0.5 5.5H10.5" />
            </CaptionGlyph>
          </CaptionButton>
          <CaptionButton aria-label="Restore">
            <CaptionGlyph viewBox="0 0 11 11">
              <path d="M0.5 2.5H8.5V10.5H0.5ZM2.5 2.5V0.5H10.5V8.5H8.5" />
            </CaptionGlyph>
          </CaptionButton>
          <CaptionButton aria-label="Close window">
            <CaptionGlyph viewBox="0 0 11 11">
              <path d="M0.5 0.5L10.5 10.5M10.5 0.5L0.5 10.5" />
            </CaptionGlyph>
          </CaptionButton>
        </CaptionButtons>
      </TitleBar>

      <Panes>
        <Pane $edge={1} $muted aria-label="System and CPU sensors">
          <ListView>
            <SensorTable rows={systemRows} phase={0} />
          </ListView>
        </Pane>
        <Pane $edge={1} aria-label="CPU core sensors">
          <ListView>
            <SensorTable rows={coreRows} phase={0} />
          </ListView>
          <ScrollBar before={0} thumb={1164} after={122} />
        </Pane>
        <Pane $edge={2} aria-label="Network and GPU sensors">
          <ListView>
            <SensorTable rows={gpuRows} phase={1} />
          </ListView>
          <ScrollBar before={863} thumb={412} after={11} />
        </Pane>
      </Panes>

      <ToolBar>
        <Group $gap={2}>
          <ToolButton aria-label="Expand columns">
            <ExpandIcon />
          </ToolButton>
          <ToolButton aria-label="Shrink columns">
            <ShrinkIcon />
          </ToolButton>
        </Group>
        <Group $gap={5}>
          <Group $gap={10}>
            <ToolButton aria-label="System summary">
              <InspectIcon />
            </ToolButton>
            <ToolButton aria-label="Remote monitoring">
              <NetworkIcon />
            </ToolButton>
          </Group>
          <Elapsed>0:59:32</Elapsed>
          <Group $gap={3}>
            <ToolButton aria-label="Reset timer">
              <WallClockIcon />
            </ToolButton>
            <ToolButton aria-label="Start logging">
              <LogIcon />
            </ToolButton>
          </Group>
          <Group $gap={4}>
            <ToolButton aria-label="Settings">
              <GearIcon />
            </ToolButton>
            <ToolButton $primary aria-label="Close">
              <CrossIcon />
            </ToolButton>
          </Group>
        </Group>
      </ToolBar>
    </Window>
  );
}
